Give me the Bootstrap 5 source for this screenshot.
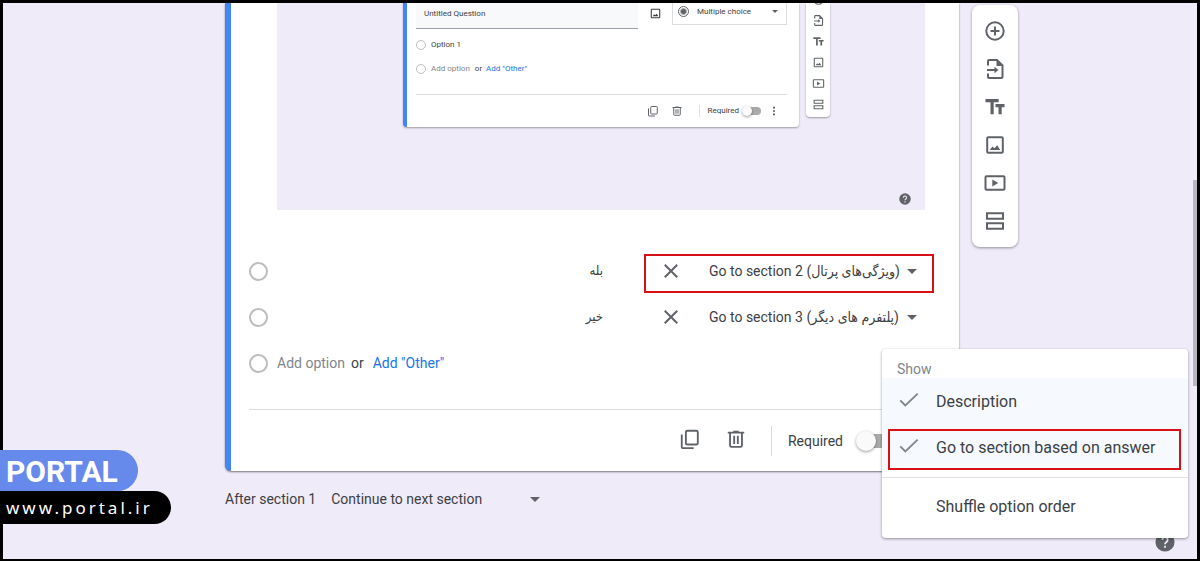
<!DOCTYPE html>
<html lang="en">
<head>
<meta charset="utf-8">
<meta name="viewport" content="width=device-width, initial-scale=1">
<title>Form editor</title>
<link href="https://cdn.jsdelivr.net/npm/bootstrap@5.3.0/dist/css/bootstrap.min.css" rel="stylesheet">
<style>
:root { --ink: #3c4043; --icon: #5f6368; --faint: #80868b; --lilac: #f0ebf9; --blue: #4285f4; --link: #1a73e8; --red: #d80f14; }
body { font-family: Roboto, "Liberation Sans", "DejaVu Sans Condensed", sans-serif; font-size: 14px; line-height: 20px; color: var(--ink); background: #000; }
svg { display: block; fill: none; stroke: currentColor; stroke-width: 2; flex: none; }
button, select, input { font: inherit; color: inherit; }
.plain { border: 0; background: none; padding: 0; }
.faint { color: var(--faint); }
.add-other { color: var(--link); text-decoration: none; }
.frame { min-height: 100vh; border: 3px solid #000; border-bottom-width: 2px; background: var(--lilac); }
.editor { max-width: 836px; padding-left: 43px; gap: 13px; }
.question { border-left: 6px solid var(--blue); border-radius: 0 0 6px 6px; box-shadow: 0 1px 2px rgba(0,0,0,.5); padding: 0 24px 0 18px; }
.tools { width: 46px; border-radius: 8px; box-shadow: 0 1px 3px rgba(0,0,0,.4); color: var(--icon); padding: 7px 0; margin-top: 2px; }
.tools button { height: 38px; }
.preview { height: 207px; background: var(--lilac); margin: 0 10px 38px 28px; padding-left: 126px; gap: 7px; font-size: 8px; line-height: 12px; }
.preview-card { width: 396px; height: 124px; border-left: 4px solid var(--blue); border-radius: 0 0 4px 4px; box-shadow: 0 1px 2px rgba(0,0,0,.35); padding: 0 12px 0 9px; }
.preview-head { height: 30px; }
.preview-title { width: 222px; height: 26px; border: 0; border-bottom: 1px solid #9aa0a6; background: #f8f9fb; padding: 0 8px 5px; }
.preview-kind { width: 115px; height: 22px; border: 1px solid #dadce0; border-top: 0; padding: 0 8px 4px 5px; }
.preview-row { height: 24px; gap: 5px; }
.preview-row .add-other { margin-left: -1px; }
.preview-foot { height: 32px; border-top: 1px solid #dadce0; margin-top: 13px; }
.preview-tools { width: 24px; height: 114px; border-radius: 0 0 4px 4px; box-shadow: 0 1px 2px rgba(0,0,0,.35); color: var(--icon); padding-bottom: 2px; }
.preview-tools button { height: 21px; flex: none; }
.help { color: var(--icon); }
.preview .help { right: 14px; bottom: 5px; }
.pick { appearance: none; border: 2px solid #bdbdbd; border-radius: 50%; background: #fff; width: 19px; height: 19px; margin: 0; flex: none; }
.pick-mini { width: 10px; height: 10px; border-width: 1px; }
.pick-mini:checked { width: 11px; height: 11px; border-color: var(--icon); background: radial-gradient(var(--icon) 2px, #fff 4px); }
.option-row { height: 46px; gap: 9px; }
.option-row > label + span { margin-left: -3px; }
.answer { font-family: "DejaVu Sans Condensed", "DejaVu Sans", sans-serif; font-size: 13px; }
.branch { width: 290px; height: 39px; border: 2px solid transparent; padding: 0 15px 5px 15px; margin: 5px 1px 0 32px; }
.marked { border-color: var(--red); }
.pull { appearance: none; background: none; border: 0; padding: 0; outline: 0; }
.branch .pull { margin-left: 28px; }
.caret { border: 5px solid transparent; border-top-color: var(--icon); border-bottom: 0; flex: none; }
.caret-mini { border-width: 3px; border-bottom: 0; }
.card-foot { height: 62px; border-top: 1px solid #dadce0; margin-top: 23px; padding-right: 42px; }
.switch { appearance: none; width: 34px; height: 14px; background: #aaa; margin: 0; border-radius: 7px; position: relative; }
.switch::before { content: ""; position: absolute; left: -3px; top: -3px; width: 20px; height: 20px; border-radius: 50%; background: #fafafa; box-shadow: 0 1px 3px rgba(0,0,0,.4); }
.switch-mini { width: 18px; height: 8px; }
.switch-mini::before { width: 10px; height: 10px; left: -1px; top: -1px; }
.rule { width: 1px; height: 30px; background: #dadce0; }
.after { height: 56px; gap: 15px; }
.after .pull { width: 184px; }
.options-menu { right: 9px; bottom: 21px; width: 306px; border: 0; border-radius: 4px; box-shadow: 0 1px 3px rgba(0,0,0,.4); padding: 11px 0 8px; font-size: 16px; color: var(--ink); }
.menu-title { color: var(--faint); font-size: 14px; height: 18px; line-height: 18px; padding-left: 15px; }
.ticked { background: #f6faff; padding: 5px 7px 0 6px; height: 46px; }
.menu-choice { height: 41px; width: 100%; border: 2px solid transparent; padding: 0 0 4px 8px; gap: 16px; }
.menu-choice.marked { border-color: var(--red); }
.menu-choice svg { color: var(--faint); }
.menu-line { height: 1px; margin: 7px 0 6px; background: #e0e2e5; border: 0; opacity: 1; }
.shuffle { height: 46px; padding-left: 54px; }
.page-help { right: 22px; bottom: 7px; }
.thumb { right: 0; top: 177px; width: 4px; height: 206px; background: #b9b5c1; }
.brand { left: -3px; bottom: 35px; color: #fff; }
.brand-name { width: 138px; height: 41px; border-radius: 0 21px 21px 0; background: #668aeb; font-size: 30px; font-weight: 700; line-height: 43px; padding-left: 6px; }
.brand-site { width: 171px; height: 33px; border-radius: 0 17px 17px 0; background: #000; font: 17px/33px "Noto Sans", sans-serif; letter-spacing: 3px; padding-left: 6px; }
</style>
<script src="https://cdn.jsdelivr.net/npm/bootstrap@5.3.0/dist/js/bootstrap.bundle.min.js"></script>
</head>
<body>
<svg class="d-none" aria-hidden="true">
  <symbol id="i-add" viewBox="0 0 24 24"><circle cx="12" cy="12" r="8.700"/><path d="M12 7.500v9M7.500 12h9"/></symbol>
  <symbol id="i-import" viewBox="0 0 24 24"><path d="M5 8.500V4q0-1 1-1h8l5.500 5.500V20q0 1-1 1H6q-1 0-1-1v-3.500M4 13h8.500"/><path d="M13.500 3v6H19.500zM11.500 9.800l4 3.200-4 3.200z" fill="currentColor" stroke="none"/></symbol>
  <symbol id="i-text" viewBox="0 0 24 24"><path d="M2.500 4v3.200h5v12h3.200v-12h5V4zM21.500 9h-9v3.200h3v7h3.200v-7h2.800z" fill="currentColor" stroke="none"/></symbol>
  <symbol id="i-image" viewBox="0 0 24 24"><rect x="4.200" y="4.200" width="15.600" height="15.600" rx="1"/><path d="M6.800 17l2.600-3.600 2 1.900 2.800-3 3 4.700z" fill="currentColor" stroke="none"/></symbol>
  <symbol id="i-video" viewBox="0 0 24 24"><rect x="2.500" y="5.200" width="19" height="13.600" rx="1"/><path d="M9.300 8.500v7l6-3.500z" fill="currentColor" stroke="none"/></symbol>
  <symbol id="i-section" viewBox="0 0 24 24"><path d="M4 4.200h16v5.600H4zM4 14.200h16v5.600H4z"/></symbol>
  <symbol id="i-copy" viewBox="0 0 24 24"><rect x="7.500" y="3" width="13" height="15" rx="1.500"/><path d="M3 7v14q0 1 1 1h12"/></symbol>
  <symbol id="i-bin" viewBox="0 0 24 24"><path d="M3 5h18M9 4h6M5.500 5v14q0 1.500 1.500 1.500h10q1.500 0 1.500-1.500V5M10 8.500v9M14 8.500v9"/></symbol>
  <symbol id="i-cross" viewBox="0 0 24 24"><path d="M4.500 4.500l15 15M19.500 4.500l-15 15" stroke-width="2.400"/></symbol>
  <symbol id="i-tick" viewBox="0 0 24 24"><path d="M2.500 12.500l5.500 5.500L21.500 5"/></symbol>
  <symbol id="i-help" viewBox="0 0 24 24"><circle cx="12" cy="12" r="11.500" fill="currentColor" stroke="none"/><path d="M8.800 9.300a3.200 3.200 0 1 1 5 2.600q-1.800 1.200-1.800 2.800M12 16.500v2.300" stroke="#f0ebf9" stroke-width="2.200"/></symbol>
  <symbol id="i-more" viewBox="0 0 24 24"><path d="M10 2h4v4h-4zM10 10h4v4h-4zM10 18h4v4h-4z" fill="currentColor" stroke="none"/></symbol>
</svg>

<div class="frame position-relative">
  <main class="editor d-flex align-items-start mx-auto">
    <div class="flex-grow-1">
      <section class="question bg-white">
        <div class="preview position-relative d-flex align-items-start overflow-hidden">
          <div class="preview-card bg-white">
            <div class="preview-head d-flex align-items-start justify-content-between">
              <input class="preview-title" type="text" value="Untitled Question" aria-label="Question title">
              <button class="plain mt-1" type="button" aria-label="Add image"><svg width="13" height="13"><use href="#i-image"/></svg></button>
              <div class="preview-kind d-flex align-items-center">
                <input class="pick pick-mini me-2" type="radio" checked aria-label="Kind">
                <select class="pull flex-grow-1" aria-label="Question type"><option>Multiple choice</option></select>
                <span class="caret caret-mini"></span>
              </div>
            </div>
            <div class="preview-row d-flex align-items-center"><input class="pick pick-mini" type="radio" id="po1" name="po"><label for="po1">Option 1</label></div>
            <div class="preview-row d-flex align-items-center"><input class="pick pick-mini" type="radio" id="po2" name="po"><label for="po2" class="faint">Add option</label><span>or</span><a href="#" class="add-other">Add "Other"</a></div>
            <div class="preview-foot d-flex align-items-center justify-content-end">
              <button class="plain me-2" type="button" aria-label="Duplicate"><svg width="12" height="12" color="#5f6368"><use href="#i-copy"/></svg></button>
              <button class="plain ms-1 me-3" type="button" aria-label="Delete"><svg width="12" height="12" color="#5f6368"><use href="#i-bin"/></svg></button>
              <label for="preq" class="border-start ps-2 me-1">Required</label>
              <input class="switch switch-mini" type="checkbox" id="preq">
              <button class="plain ms-2 me-2" type="button" aria-label="More"><svg width="10" height="10"><use href="#i-more"/></svg></button>
            </div>
          </div>
          <div class="preview-tools bg-white d-flex flex-column align-items-center justify-content-end overflow-hidden">
            <button class="plain" type="button" aria-label="Add"><svg width="13" height="13"><use href="#i-add"/></svg></button>
            <button class="plain" type="button" aria-label="Import"><svg width="13" height="13"><use href="#i-import"/></svg></button>
            <button class="plain" type="button" aria-label="Title"><svg width="13" height="13"><use href="#i-text"/></svg></button>
            <button class="plain" type="button" aria-label="Image"><svg width="13" height="13"><use href="#i-image"/></svg></button>
            <button class="plain" type="button" aria-label="Video"><svg width="13" height="13"><use href="#i-video"/></svg></button>
            <button class="plain" type="button" aria-label="Section"><svg width="13" height="13"><use href="#i-section"/></svg></button>
          </div>
          <button class="plain help position-absolute" type="button" aria-label="Help"><svg width="12" height="12"><use href="#i-help"/></svg></button>
        </div>

        <div class="option-row d-flex align-items-center">
          <input class="pick" type="radio" name="opt" aria-label="Option 1">
          <input class="plain answer flex-grow-1" type="text" dir="rtl" lang="fa" value="بله" aria-label="Option 1 text">
          <div class="branch marked d-flex align-items-center">
            <button class="plain" type="button" aria-label="Remove option 1"><svg width="20" height="20" color="#5f6368"><use href="#i-cross"/></svg></button>
            <select class="pull flex-grow-1" aria-label="Option 1 destination"><option>Go to section 2 (ویژگی‌های پرتال)</option></select>
            <span class="caret"></span>
          </div>
        </div>
        <div class="option-row d-flex align-items-center">
          <input class="pick" type="radio" name="opt" aria-label="Option 2">
          <input class="plain answer flex-grow-1" type="text" dir="rtl" lang="fa" value="خیر" aria-label="Option 2 text">
          <div class="branch d-flex align-items-center">
            <button class="plain" type="button" aria-label="Remove option 2"><svg width="20" height="20" color="#5f6368"><use href="#i-cross"/></svg></button>
            <select class="pull flex-grow-1" aria-label="Option 2 destination"><option>Go to section 3 (پلتفرم های دیگر)</option></select>
            <span class="caret"></span>
          </div>
        </div>
        <div class="option-row d-flex align-items-center">
          <input class="pick" type="radio" name="opt" id="opt3">
          <label for="opt3" class="faint">Add option</label>
          <span>or</span>
          <a href="#" class="add-other">Add "Other"</a>
        </div>

        <div class="card-foot d-flex align-items-center justify-content-end">
          <button class="plain me-4 mb-1" type="button" aria-label="Duplicate"><svg width="22" height="22" color="#5f6368"><use href="#i-copy"/></svg></button>
          <button class="plain mb-1" type="button" aria-label="Delete"><svg width="22" height="22" color="#5f6368"><use href="#i-bin"/></svg></button>
          <span class="rule ms-4 me-3"></span>
          <label for="req">Required</label>
          <input class="switch ms-3" type="checkbox" id="req">
        </div>
      </section>
      <div class="after d-flex align-items-center">
        <label for="next">After section 1</label>
        <select class="pull" id="next"><option>Continue to next section</option></select>
        <span class="caret"></span>
      </div>
    </div>

    <nav class="tools bg-white d-flex flex-column align-items-center flex-shrink-0" aria-label="Add to form">
      <button class="plain" type="button" aria-label="Add question"><svg width="24" height="24"><use href="#i-add"/></svg></button>
      <button class="plain" type="button" aria-label="Import questions"><svg width="24" height="24"><use href="#i-import"/></svg></button>
      <button class="plain" type="button" aria-label="Add title"><svg width="24" height="24"><use href="#i-text"/></svg></button>
      <button class="plain" type="button" aria-label="Add image"><svg width="24" height="24"><use href="#i-image"/></svg></button>
      <button class="plain" type="button" aria-label="Add video"><svg width="24" height="24"><use href="#i-video"/></svg></button>
      <button class="plain" type="button" aria-label="Add section"><svg width="24" height="24"><use href="#i-section"/></svg></button>
    </nav>
  </main>

  <button class="plain help page-help position-absolute" type="button" aria-label="Help"><svg width="20" height="20"><use href="#i-help"/></svg></button>
  <div class="thumb position-absolute"></div>

  <div class="options-menu dropdown-menu show">
    <div class="menu-title">Show</div>
    <div class="ticked"><button class="plain menu-choice d-flex align-items-center" type="button"><svg class="mb-1" width="22" height="22"><use href="#i-tick"/></svg>Description</button></div>
    <div class="ticked"><button class="plain menu-choice marked d-flex align-items-center" type="button"><svg class="mb-1" width="22" height="22"><use href="#i-tick"/></svg>Go to section based on answer</button></div>
    <hr class="menu-line">
    <button class="plain shuffle w-100 text-start" type="button">Shuffle option order</button>
  </div>

  <div class="brand position-absolute">
    <div class="brand-name">PORTAL</div>
    <div class="brand-site">www.portal.ir</div>
  </div>
</div>
</body>
</html>
